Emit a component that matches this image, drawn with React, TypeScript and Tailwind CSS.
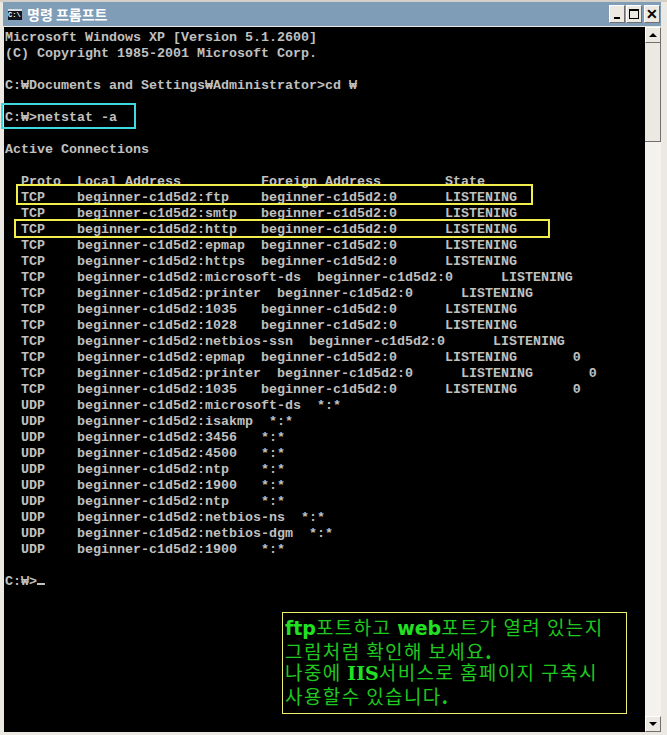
const lines = [
  "Microsoft Windows XP [Version 5.1.2600]",
  "(C) Copyright 1985-2001 Microsoft Corp.",
  "",
  "C:₩Documents and Settings₩Administrator>cd ₩",
  "",
  "C:₩>netstat -a",
  "",
  "Active Connections",
  "",
  "  Proto  Local Address          Foreign Address        State",
  "  TCP    beginner-c1d5d2:ftp    beginner-c1d5d2:0      LISTENING",
  "  TCP    beginner-c1d5d2:smtp   beginner-c1d5d2:0      LISTENING",
  "  TCP    beginner-c1d5d2:http   beginner-c1d5d2:0      LISTENING",
  "  TCP    beginner-c1d5d2:epmap  beginner-c1d5d2:0      LISTENING",
  "  TCP    beginner-c1d5d2:https  beginner-c1d5d2:0      LISTENING",
  "  TCP    beginner-c1d5d2:microsoft-ds  beginner-c1d5d2:0      LISTENING",
  "  TCP    beginner-c1d5d2:printer  beginner-c1d5d2:0      LISTENING",
  "  TCP    beginner-c1d5d2:1035   beginner-c1d5d2:0      LISTENING",
  "  TCP    beginner-c1d5d2:1028   beginner-c1d5d2:0      LISTENING",
  "  TCP    beginner-c1d5d2:netbios-ssn  beginner-c1d5d2:0      LISTENING",
  "  TCP    beginner-c1d5d2:epmap  beginner-c1d5d2:0      LISTENING       0",
  "  TCP    beginner-c1d5d2:printer  beginner-c1d5d2:0      LISTENING       0",
  "  TCP    beginner-c1d5d2:1035   beginner-c1d5d2:0      LISTENING       0",
  "  UDP    beginner-c1d5d2:microsoft-ds  *:*",
  "  UDP    beginner-c1d5d2:isakmp  *:*",
  "  UDP    beginner-c1d5d2:3456   *:*",
  "  UDP    beginner-c1d5d2:4500   *:*",
  "  UDP    beginner-c1d5d2:ntp    *:*",
  "  UDP    beginner-c1d5d2:1900   *:*",
  "  UDP    beginner-c1d5d2:ntp    *:*",
  "  UDP    beginner-c1d5d2:netbios-ns  *:*",
  "  UDP    beginner-c1d5d2:netbios-dgm  *:*",
  "  UDP    beginner-c1d5d2:1900   *:*",
  "",
];

function Btn({ children, className = "" }: { children: React.ReactNode; className?: string }) {
  return (
    <div className={`h-[18px] bg-[#ece9e2] border-r border-b border-[#6f6f6f] border-t border-l border-t-white border-l-white flex items-center justify-center ${className}`}>
      {children}
    </div>
  );
}

export default function App() {
  return (
    <div className="w-[667px] h-[735px] bg-[#ece9e2] overflow-hidden flex flex-col border-t-2 border-[#d4d0c8] pr-[3px] relative">
      <div className="h-[24px] bg-[#7f9db7] ml-[3px] mr-[3px] flex items-center shrink-0">
        <div className="w-[14px] h-[11px] bg-[#10141c] border-t-2 border-[#d8dde8] ml-[5px] mr-[5px] text-white text-[7px] leading-[8px] font-bold font-['Liberation_Mono'] overflow-hidden">C:\</div>
        <span className="text-white text-[14px] font-bold font-['Noto_Sans_CJK_KR',sans-serif]">명령 프롬프트</span>
        <div className="ml-auto flex gap-0 mr-[1px]">
          <Btn className="w-[16px]"><div className="w-[6px] h-[2px] bg-black mt-[8px]" /></Btn>
          <Btn className="w-[16px] mx-[1px]"><div className="w-[10px] h-[10px] border border-black border-t-2" /></Btn>
          <Btn className="w-[16px] ml-[1px]"><span className="text-black text-[14px] font-bold leading-none font-['Liberation_Sans']">✕</span></Btn>
        </div>
      </div>
      <div className="flex flex-1 mt-[1px] pl-[4px] bg-[#ece9e2] min-h-0 mb-[3px]">
        <div className="w-[641px] bg-black pt-[3px] pl-[1px] text-[#c0c0c0] font-['Liberation_Mono','DejaVu_Sans_Mono',monospace] font-bold text-[13.33px] leading-[16px] whitespace-pre relative shrink-0">
          {lines.map((l, i) => (
            <div key={i} className="h-[16px]">{l}</div>
          ))}
          <div className="h-[16px] relative">
            C:₩&gt;<span className="inline-block w-[8px] h-[2px] bg-[#c0c0c0] align-baseline" />
          </div>
          <div className="absolute left-[-3px] top-[76px] w-[135px] h-[26px] border-2 border-[#3fd8dc]" />
          <div className="absolute left-[12px] top-[157px] w-[517px] h-[21px] border-2 border-[#f2ee4c]" />
          <div className="absolute left-[10px] top-[192px] w-[536px] h-[19px] border-2 border-[#f2ee4c]" />
          <div className="absolute left-[278px] top-[585px] w-[345px] h-[102px] border border-[#f0f070] bg-black pl-[2px] pt-[3px] text-[#1fc81f] font-['Noto_Sans_CJK_KR',sans-serif] font-normal text-[19px] tracking-[1.4px] leading-[21px] whitespace-nowrap">
            <div className="h-[24px]"><b className="font-['DejaVu_Sans'] text-[#22e022] text-[19px] leading-none tracking-normal">ftp</b>포트하고 <b className="font-['DejaVu_Sans'] text-[#22e022] text-[19px] leading-none tracking-normal">web</b>포트가 열려 있는지</div>
            <div className="h-[21px]">그림처럼 확인해 보세요<b>.</b></div>
            <div className="h-[24px]">나중에 <b className="font-['DejaVu_Serif'] text-[#22e022] text-[19px] leading-none tracking-normal">IIS</b>서비스로 홈페이지 구축시</div>
            <div className="h-[23px]">사용할수 있습니다<b>.</b></div>
          </div>
        </div>
        <div className="w-[16px] flex flex-col shrink-0 bg-[#f4f2ec]">
          <div className="h-[16px] bg-[#ece9e2] border-t border-l border-t-white border-l-white border-r border-b border-r-[#6f6f6f] border-b-[#6f6f6f] flex items-center justify-center">
            <div className="w-0 h-0 border-x-[4px] border-x-transparent border-b-[4px] border-b-black" />
          </div>
          <div className="h-[99px] bg-[#ece9e2] border-r border-b border-[#6f6f6f]" />
          <div className="flex-1" />
          <div className="h-[16px] bg-[#ece9e2] border-t border-l border-t-white border-l-white border-r border-b border-r-[#6f6f6f] border-b-[#6f6f6f] flex items-center justify-center">
            <div className="w-0 h-0 border-x-[4px] border-x-transparent border-t-[4px] border-t-black" />
          </div>
        </div>
      </div>
    </div>
  );
}
